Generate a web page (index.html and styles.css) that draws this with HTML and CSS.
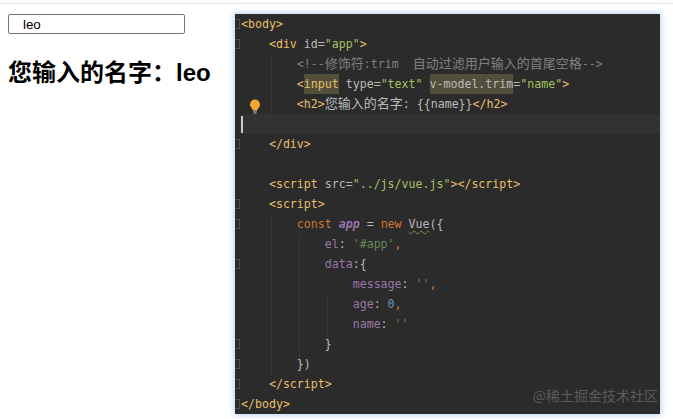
FILE: index.html
```html
<!DOCTYPE html>
<html lang="zh">
<head>
<meta charset="utf-8">
<title>v-model.trim</title>
<link rel="stylesheet" href="styles.css">
</head>
<body>
<div class="topline"></div>
<main class="page">
  <section class="demo">
    <input class="name-input" type="text" value="leo">
    <h2 class="result">您输入的名字&#xFF1A;leo</h2>
  </section>
  <section class="editor">
    <span class="guide g1 a"></span>
    <span class="guide g1 b"></span>
    <span class="guide g2"></span>
    <span class="guide g3"></span>
    <svg class="bulb" width="12" height="15" viewBox="0 0 12 15"><path d="M6 .5a5 5 0 0 1 5 5c0 2-1.300 3-2.100 4.200-.3.5-.4.8-.4 1.300H3.500c0-.5-.1-.8-.4-1.300C2.300 8.500 1 7.500 1 5.500a5 5 0 0 1 5-5z" fill="#f2a734"/><path d="M4 12h4M4.500 14h3" stroke="#c9c9c9" stroke-width="1.200"/></svg>
    <div class="line fold"><span class="t">&lt;body&gt;</span></div>
    <div class="line fold">    <span class="t">&lt;div</span> <span class="a">id=</span><span class="v">"app"</span><span class="t">&gt;</span></div>
    <div class="line">        <span class="c">&lt;!--<span class="z">修饰符</span>:trim  <span class="z">自动过滤用户输入的首尾空格</span>--&gt;</span></div>
    <div class="line">        <span class="t">&lt;<span class="hl">input</span></span> <span class="a">type=</span><span class="v">"text"</span> <span class="a"><span class="hl">v-model.trim</span>=</span><span class="v">"name"</span><span class="t">&gt;</span></div>
    <div class="line">        <span class="t">&lt;h2&gt;</span><span class="p"><span class="z">您输入的名字</span>: {{name}}</span><span class="t">&lt;/h2&gt;</span></div>
    <div class="line current"><span class="caret"></span></div>
    <div class="line fold">    <span class="t">&lt;/div&gt;</span></div>
    <div class="line"></div>
    <div class="line">    <span class="t">&lt;script</span> <span class="a">src=</span><span class="v">"../js/vue.js"</span><span class="t">&gt;&lt;/script&gt;</span></div>
    <div class="line fold">    <span class="t">&lt;script&gt;</span></div>
    <div class="line fold">        <span class="k">const</span> <span class="i">app</span> <span class="p">=</span> <span class="k">new</span> <span class="p"><span class="squiggle">Vue</span>({</span></div>
    <div class="line">            <span class="m">el</span><span class="p">:</span> <span class="s">'#app'</span><span class="k">,</span></div>
    <div class="line fold">            <span class="m">data</span><span class="p">:{</span></div>
    <div class="line">                <span class="m">message</span><span class="p">:</span> <span class="s">''</span><span class="k">,</span></div>
    <div class="line">                <span class="m">age</span><span class="p">:</span> <span class="n">0</span><span class="k">,</span></div>
    <div class="line">                <span class="m">name</span><span class="p">:</span> <span class="s">''</span></div>
    <div class="line fold">            <span class="p">}</span></div>
    <div class="line fold">        <span class="p">})</span></div>
    <div class="line fold">    <span class="t">&lt;/script&gt;</span></div>
    <div class="line fold"><span class="t">&lt;/body&gt;</span></div>
    <span class="watermark">@稀土掘金技术社区</span>
  </section>
</main>
</body>
</html>
```
FILE: styles.css
```css
html, body {
  margin: 0;
  height: 100%;
  overflow: hidden;
  background: #fff;
}
.topline {
  height: 3px;
  border-bottom: 1px solid #e2e2e2;
}
.page {
  display: flex;
  padding: 10px 0 0 8px;
}
.demo {
  width: 227px;
  flex: none;
}
.name-input {
  display: block;
  box-sizing: border-box;
  width: 177px;
  height: 20px;
  padding: 0 0 0 14px;
  border: 1px solid #767676;
  border-radius: 2px;
  font: 13.33px "Liberation Sans", Arial, sans-serif;
  color: #000;
  background: #fff;
}
.result {
  margin: 23px 0 0;
  font: bold 24px/32px "Liberation Sans", "Noto Sans CJK SC", sans-serif;
  color: #000;
  white-space: nowrap;
}
.editor {
  position: relative;
  box-sizing: border-box;
  width: 425px;
  height: 400px;
  padding-left: 6px;
  background: #2b2b2b;
  box-shadow: 0 0 6px 1px #b4d0f5;
  font: 11.6px/20px "DejaVu Sans Mono", "Liberation Mono", "Noto Sans CJK SC", monospace;
  color: #a9b7c6;
}
.line {
  position: relative;
  height: 20px;
  white-space: pre;
}
.current {
  margin-left: -1px;
  background: #323232;
}
.caret {
  position: absolute;
  left: 1px;
  top: 2px;
  width: 2px;
  height: 17px;
  background: #c8c8c8;
}
.fold::before {
  content: "";
  position: absolute;
  left: -6px;
  top: 5px;
  width: 4px;
  height: 8px;
  border: 1px solid #4c4c4c;
  border-left: 0;
}
.t { color: #e8bf6a; }
.a { color: #bababa; }
.v { color: #a5c261; }
.c { color: #808080; }
.p { color: #bababa; }
.k { color: #cc7832; }
.s { color: #6a8759; }
.n { color: #6897bb; }
.m { color: #9876aa; }
.i { color: #9876aa; font-style: italic; font-weight: bold; }
.z {
  font-family: "Noto Sans CJK SC", sans-serif;
  font-size: 13px;
  line-height: 13px;
}
.hl {
  display: inline-block;
  height: 20px;
  background: #52503a;
}
.squiggle {
  text-decoration: underline wavy #7f8f50 1px;
  text-underline-offset: 2px;
}
.guide {
  position: absolute;
  width: 1px;
  background: #383838;
}
.g1.a { left: 36px; top: 40px; height: 80px; }
.g1.b { left: 36px; top: 200px; height: 160px; }
.g2 { left: 64px; top: 220px; height: 140px; }
.g3 { left: 92px; top: 280px; height: 60px; }
.bulb {
  position: absolute;
  left: 14px;
  top: 85px;
  z-index: 1;
}
.watermark {
  position: absolute;
  right: 2px;
  bottom: 10px;
  font: 14px/18px "Noto Sans CJK SC", sans-serif;
  color: #5a5a5a;
}
```
